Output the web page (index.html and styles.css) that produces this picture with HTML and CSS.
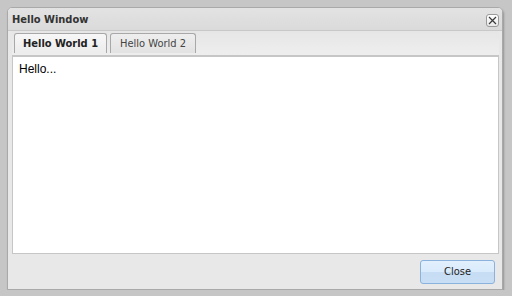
FILE: index.html
```html
<!DOCTYPE html>
<html lang="en">
<head>
    <meta charset="UTF-8">
    <title>Hello Window</title>
    <link rel="stylesheet" href="styles.css">
</head>
<body>
    <div class="window">
        <!-- Title bar -->
        <div class="window-header">
            <span class="window-title">Hello Window</span>
            <span class="tool-close">
                <svg width="9" height="9" viewBox="0 0 9 9">
                    <path d="M1 1 L8 8 M8 1 L1 8" stroke="#3a3a3a" stroke-width="1.2" fill="none"/>
                </svg>
            </span>
        </div>

        <div class="window-body">
            <!-- Tabs -->
            <div class="tab-strip">
                <div class="tab active">Hello World 1</div>
                <div class="tab">Hello World 2</div>
            </div>
            <div class="tab-panel">Hello...</div>
        </div>

        <!-- Footer -->
        <div class="window-footer">
            <button class="button">Close</button>
        </div>
    </div>
</body>
</html>
```

FILE: styles.css
```css
body {
    margin: 0;
    padding: 7px 9px 0 7px;
    background-color: #c6c6c6;
    font-family: "DejaVu Sans Condensed", "DejaVu Sans", sans-serif;
    font-size: 11px;
}

.window {
    height: 281px;
    display: flex;
    flex-direction: column;
    background-color: #e8e8e8;
    border: 1px solid #a9a9a9;
    border-radius: 5px 5px 0 0;
    box-shadow: 1px 2px 2px rgba(0, 0, 0, 0.25);
}

/* Header */
.window-header {
    height: 22px;
    display: flex;
    align-items: center;
    justify-content: space-between;
    padding: 0 3px 0 4px;
    background: linear-gradient(#e3e3e3, #dadada);
    border-radius: 4px 4px 0 0;
}

    .window-title {
        font-weight: bold;
        color: #333;
        margin-top: 1px;
    }

    .tool-close {
        width: 11px;
        height: 11px;
        display: flex;
        align-items: center;
        justify-content: center;
        border: 1px solid #9a9a9a;
        border-radius: 3px;
        background: linear-gradient(#ffffff, #e9e9e9);
        margin-top: 2px;
    }

/* Tabs + panel */
.window-body {
    flex: 1;
    display: flex;
    flex-direction: column;
    padding: 0 3px 0 4px;
    border-top: 1px solid #c8c8c8;
}

.tab-strip {
    height: 22px;
    display: flex;
    align-items: flex-end;
    gap: 3px;
    padding: 0 0 2px 2px;
    background: linear-gradient(#e6e6e6, #eeeeee);
    border-bottom: 1px solid #c6c6c6;
}

    .tab {
        height: 19px;
        padding: 0 9px;
        display: flex;
        align-items: center;
        color: #444;
        background: linear-gradient(#eeeeee, #e2e2e2);
        border: 1px solid #a8a8a8;
        border-bottom: none;
        border-radius: 3px 3px 0 0;
    }

        .tab.active {
            padding: 0 8px;
            font-weight: bold;
            color: #222;
            background: linear-gradient(#f7f7f7, #ececec);
        }

.tab-panel {
    flex: 1;
    background-color: #fff;
    border: 1px solid #c6c6c6;
    padding: 5px 6px;
    font-family: "Liberation Sans", Arial, sans-serif;
    font-size: 12px;
    color: #000;
}

/* Footer */
.window-footer {
    height: 35px;
    display: flex;
    align-items: center;
    justify-content: flex-end;
    padding-right: 7px;
}

.button {
    width: 75px;
    height: 24px;
    font-family: "DejaVu Sans Condensed", "DejaVu Sans", sans-serif;
    font-size: 11px;
    color: #222;
    background: linear-gradient(#e3f0fd 0%, #d9ebfc 50%, #c6ddf4 51%, #c8def5 100%);
    border: 1px solid #8ab2dc;
    border-radius: 3px;
    padding: 0;
}
```
